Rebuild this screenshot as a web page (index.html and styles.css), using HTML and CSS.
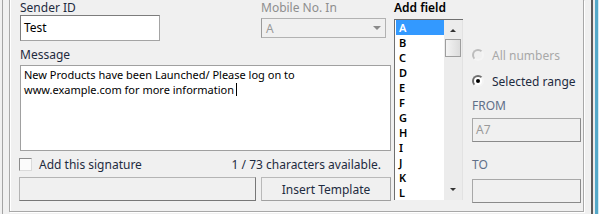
FILE: index.html
```html
<!DOCTYPE html>
<html lang="en">
<head>
    <meta charset="UTF-8">
    <title>Send Message</title>
    <link rel="stylesheet" href="styles.css">
</head>
<body>
    <div class="screen">
        <div class="window">
            <div class="group">
                <div class="main">
                    <div class="top-row">
                        <div class="field sender">
                            <div class="label">Sender ID</div>
                            <div class="textbox">Test</div>
                        </div>
                        <div class="field mobile">
                            <div class="label disabled">Mobile No. In</div>
                            <div class="combo">
                                <span>A</span>
                                <span class="combo-arrow"></span>
                            </div>
                        </div>
                    </div>
                    <div class="label message-label">Message</div>
                    <div class="message">New Products have been Launched/ Please log on to<br>www.example.com for more information<span class="caret"></span></div>
                    <div class="status-row">
                        <label class="check">
                            <span class="check-box"></span>
                            Add this signature
                        </label>
                        <span class="counter">1 / 73 characters available.</span>
                    </div>
                    <div class="bottom-row">
                        <div class="template-box"></div>
                        <button class="btn">Insert Template</button>
                    </div>
                </div>

                <div class="fields">
                    <div class="label dark">Add field</div>
                    <div class="listbox">
                        <ul class="items">
                            <li class="selected">A</li>
                            <li>B</li>
                            <li>C</li>
                            <li>D</li>
                            <li>E</li>
                            <li>F</li>
                            <li>G</li>
                            <li>H</li>
                            <li>I</li>
                            <li>J</li>
                            <li>K</li>
                            <li>L</li>
                        </ul>
                        <div class="scrollbar">
                            <span class="arrow up"></span>
                            <span class="thumb"></span>
                            <span class="arrow down"></span>
                        </div>
                    </div>
                </div>

                <div class="range">
                    <div class="radio disabled"><span class="dot"></span>All numbers</div>
                    <div class="radio checked"><span class="dot"></span>Selected range</div>
                    <div class="label muted from-label">FROM</div>
                    <div class="textbox small">A7</div>
                    <div class="label muted to-label">TO</div>
                    <div class="textbox small"></div>
                </div>
            </div>
        </div>
        <div class="edge"></div>
    </div>
</body>
</html>
```

FILE: styles.css
```css
* {
    box-sizing: border-box;
}
body {
    margin: 0;
    background: #f0f0f0;
    font-family: 'Noto Sans', 'DejaVu Sans', sans-serif;
    font-size: 12px;
    color: #1e2b40;
}
.screen {
    display: flex;
    width: 599px;
    height: 214px;
}
.window {
    margin-left: 2px;
    width: 591px;
    height: 214px;
    border-left: 1px solid #a3a3a3;
    border-right: 2px solid #5a5a5a;
    padding: 0 6px;
}
.edge {
    width: 6px;
    border-left: 2px solid #ececec;
    border-right: 1px solid #d4eaf2;
    background: #53a8c8;
}
.group {
    display: flex;
    width: 575px;
    height: 212px;
    border: 1px solid #a8a8a8;
    border-top: none;
    box-shadow: inset 1px 0 0 #fff, 1px 1px 0 #fff;
    padding-left: 10px;
}

/* left part */
.main {
    width: 371px;
}
.top-row {
    display: flex;
    height: 41px;
}
.label {
    height: 15px;
    line-height: 15px;
    white-space: nowrap;
}
.label.disabled {
    color: #8e8e8e;
}
.label.dark {
    color: #000;
    font-weight: 600;
}
.label.muted {
    color: #5f6f88;
}
.textbox {
    height: 26px;
    line-height: 24px;
    padding-left: 3px;
    background: #fff;
    border: 1px solid #a4a4a4;
    border-top-color: #7c7c7c;
    border-left-color: #7c7c7c;
    color: #000;
}
.sender {
    width: 140px;
}
.mobile {
    margin-left: 101px;
    width: 125px;
}
.combo {
    display: flex;
    justify-content: space-between;
    align-items: center;
    height: 20px;
    margin-top: 3px;
    padding: 0 4px 0 4px;
    border: 1px solid #b2b2b2;
    border-left-color: #9a9a9a;
    color: #9a9a9a;
}
.combo-arrow {
    width: 0;
    height: 0;
    border-left: 4px solid transparent;
    border-right: 4px solid transparent;
    border-top: 4px solid #8a8a8a;
}
.message-label {
    margin-top: 6px;
}
.message {
    height: 86px;
    margin-top: 3px;
    padding: 1px 3px;
    font-size: 11px;
    line-height: 15px;
    background: #fff;
    border: 1px solid #a0a0a0;
    color: #000;
}
.caret {
    display: inline-block;
    width: 1px;
    height: 13px;
    margin-left: 2px;
    vertical-align: -2px;
    background: #000;
}
.status-row {
    display: flex;
    justify-content: space-between;
    align-items: center;
    height: 26px;
    padding-right: 10px;
}
.check {
    display: flex;
    align-items: center;
    gap: 7px;
    margin-left: -1px;
}
.check-box {
    width: 13px;
    height: 13px;
    background: #fbfbfb;
    border: 1px solid #dadada;
    border-top-color: #8c8c8c;
    border-left-color: #8c8c8c;
}
.bottom-row {
    display: flex;
    justify-content: space-between;
    height: 24px;
    margin-left: -1px;
}
.template-box {
    width: 237px;
    border: 1px solid #777;
    border-top-color: #b4b4b4;
    border-left-color: #b4b4b4;
}
.btn {
    width: 130px;
    font: inherit;
    color: inherit;
    background: #f0f0f0;
    border: 1px solid #b9b9b9;
    border-right-color: #a0a0a0;
    border-bottom-color: #a0a0a0;
    padding: 0;
}

/* add field list */
.fields {
    width: 69px;
    margin-left: 3px;
}
.listbox {
    display: flex;
    height: 181px;
    margin-top: 4px;
    background: #fff;
    border-top: 1px solid #6f6f6f;
    border-left: 1px solid #6f6f6f;
}
.items {
    width: 49px;
    margin: 0;
    padding: 0;
    list-style: none;
    font-size: 11px;
    font-weight: 600;
    color: #000;
}
.items li {
    height: 15px;
    line-height: 15px;
    padding-left: 3px;
    margin-left: 1px;
}
.items li.selected {
    background: #3399ff;
    color: #fff;
}
.scrollbar {
    display: flex;
    flex-direction: column;
    align-items: center;
    width: 19px;
    background: #ececec;
    border-right: 1px solid #e2e2e2;
}
.arrow {
    width: 0;
    height: 0;
    border-left: 3px solid transparent;
    border-right: 3px solid transparent;
}
.arrow.up {
    margin-top: 9px;
    border-bottom: 3px solid #333;
}
.arrow.down {
    margin-top: auto;
    margin-bottom: 9px;
    border-top: 3px solid #333;
}
.thumb {
    width: 16px;
    height: 18px;
    margin-top: 7px;
    background: linear-gradient(to right, #f4f4f4, #dcdcdc);
    border: 1px solid #9e9e9e;
}

/* range */
.range {
    display: flex;
    flex-direction: column;
    width: 109px;
    margin-left: 9px;
    padding-top: 45px;
}
.radio {
    display: flex;
    align-items: center;
    gap: 8px;
    height: 20px;
    white-space: nowrap;
}
.radio + .radio {
    margin-top: 6px;
}
.radio.disabled {
    color: #a8a8a8;
}
.dot {
    display: flex;
    align-items: center;
    justify-content: center;
    width: 12px;
    height: 12px;
    border-radius: 50%;
    border: 2px solid;
    border-color: #6e6e6e #f4f4f4 #f4f4f4 #6e6e6e;
    background: #fff;
}
.radio.disabled .dot {
    border-color: #bcbcbc #f4f4f4 #f4f4f4 #bcbcbc;
    background: #f0f0f0;
}
.radio.checked .dot::after {
    content: '';
    width: 4px;
    height: 4px;
    border-radius: 50%;
    background: #000;
}
.from-label {
    margin-top: 7px;
}
.to-label {
    margin-top: 15px;
}
.textbox.small {
    height: 24px;
    line-height: 22px;
    margin-top: 5px;
    background: #f0f0f0;
    border-color: #a8a8a8;
    border-right-color: #8a8a8a;
    border-bottom-color: #8a8a8a;
    color: #9a9a9a;
}
.to-label + .textbox.small {
    margin-top: 7px;
}
```
